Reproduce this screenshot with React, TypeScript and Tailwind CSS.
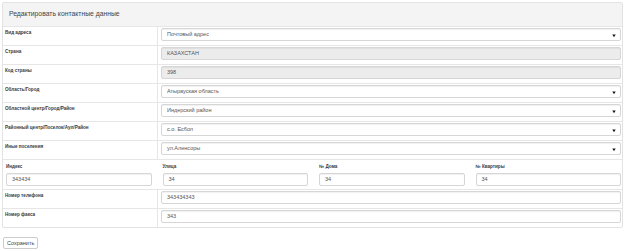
import React from "react";

const font = { fontFamily: '"Liberation Sans", Arial, sans-serif' };

function Arrow() {
  return (
    <svg width="4" height="4" viewBox="0 0 4 4" className="absolute right-[4px] top-[5px]">
      <path d="M0.3 0.5 H3.7 L2 3.3 Z" fill="#111" />
    </svg>
  );
}

function Field({ value, disabled, select }: { value: string; disabled?: boolean; select?: boolean }) {
  return (
    <div
      className={`relative h-[13px] rounded-[2px] border border-[#d6d6d6] shadow-[inset_0_1px_1px_rgba(0,0,0,0.06)] pl-[5px] text-[5.5px] leading-[11px] text-[#555] ${
        disabled ? "bg-[#ececec]" : "bg-white"
      }`}
    >
      {value}
      {select && <Arrow />}
    </div>
  );
}

function Row({ label, children }: { label: string; children: React.ReactNode }) {
  return (
    <div className="flex h-[19px] border-t border-[#e6e6e6]">
      <div className="w-[155px] shrink-0 border-r border-[#e6e6e6] pl-[2px] pt-[3px] text-[4.6px] font-bold leading-[6px] text-[#3a3a3a]">
        {label}
      </div>
      <div className="flex-1 pl-[3px] pr-[1px] pt-[1px]">{children}</div>
    </div>
  );
}

function Col({ label, value }: { label: string; value: string }) {
  return (
    <div className="flex flex-col">
      <div className="text-[4.6px] font-bold leading-[6px] text-[#3a3a3a] mb-[3px]">{label}</div>
      <Field value={value} />
    </div>
  );
}

export default function App() {
  return (
    <div style={font} className="w-[624px] h-[251px] bg-white p-[2px] pr-[1px]">
      <div className="border border-[#e3e3e3] rounded-[2px]">
        <div className="h-[23px] bg-[#f4f4f4] pl-[6px] flex items-center text-[6.8px] text-[#444]">
          Редактировать контактные данные
        </div>
        <Row label="Вид адреса">
          <Field value="Почтовый адрес" select />
        </Row>
        <Row label="Страна">
          <Field value="КАЗАХСТАН" disabled />
        </Row>
        <Row label="Код страны">
          <Field value="398" disabled />
        </Row>
        <Row label="Область/Город">
          <Field value="Атырауская область" select />
        </Row>
        <Row label="Областной центр/Город/Район">
          <Field value="Индерский район" select />
        </Row>
        <Row label="Районный центр/Поселок/Аул/Район">
          <Field value="с.о. Есбол" select />
        </Row>
        <Row label="Иные поселения">
          <Field value="ул.Аленсоры" select />
        </Row>
        <div className="h-[30px] border-t border-[#e6e6e6] pl-[3px] pr-[1px] pt-[4px] grid grid-cols-4 gap-x-[11px]">
          <Col label="Индекс" value="343434" />
          <Col label="Улица" value="34" />
          <Col label="№ Дома" value="34" />
          <Col label="№ Квартиры" value="34" />
        </div>
        <Row label="Номер телефона">
          <Field value="343434343" />
        </Row>
        <Row label="Номер факса">
          <Field value="343" />
        </Row>
      </div>
      <button className="mt-[8px] ml-[1px] h-[12px] px-[3px] border border-[#ccc] rounded-[2px] bg-white text-[5.5px] leading-[10px] text-[#444]">
        Сохранить
      </button>
    </div>
  );
}
